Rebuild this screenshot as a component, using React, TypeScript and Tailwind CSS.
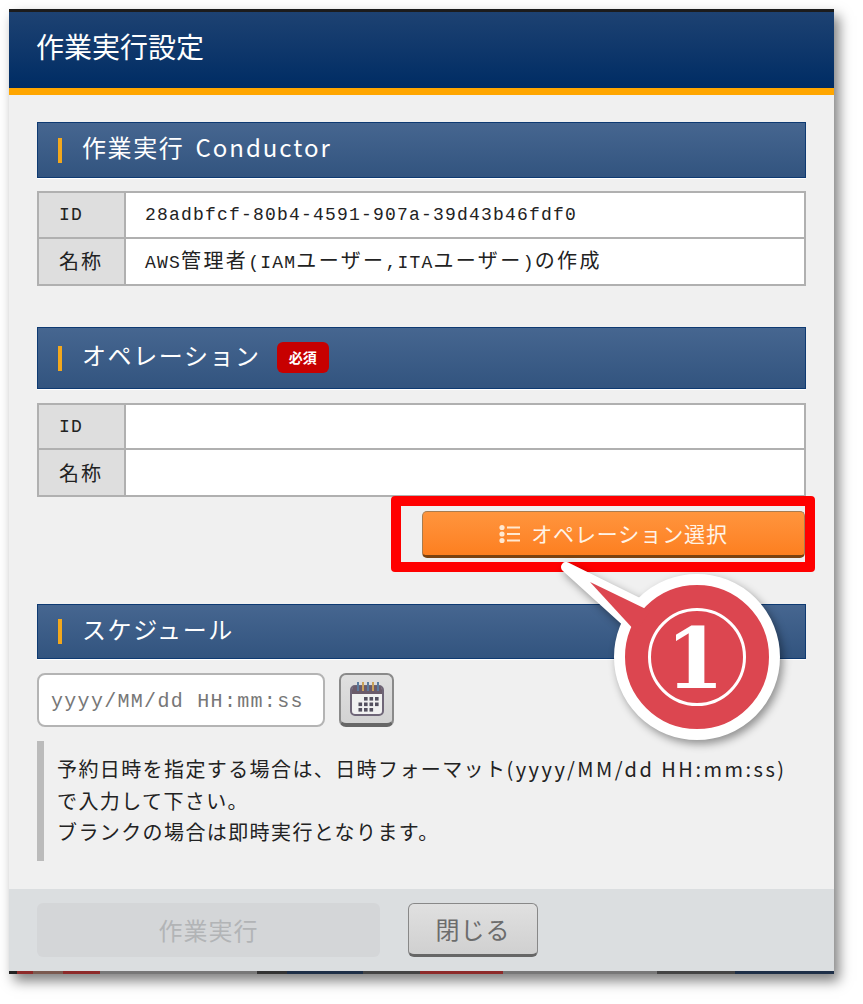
import React from 'react';

const MONO = 'font-["Liberation_Mono","Noto_Sans_CJK_JP",monospace] text-[18px] tracking-[1.2px] text-[#222]';
const JP = 'font-["Noto_Sans_CJK_JP",sans-serif] text-[20px] tracking-[2.4px]';

const SectionTitle: React.FC<{ heightClass: string; children: React.ReactNode }> = ({ heightClass, children }) => (
  <div className={`flex items-center gap-[20px] border border-[#0e3a72] bg-gradient-to-b from-[#466690] to-[#32547f] pl-[20px] shadow-[0_1px_0_#ffffff] ${heightClass}`}>
    <span className="h-[25px] w-[4px] bg-[#f2a81d]" />
    {children}
  </div>
);

const Title: React.FC<{ children: React.ReactNode }> = ({ children }) => (
  <span className='pb-[6px] font-["Noto_Sans_CJK_JP",sans-serif] text-[24px] tracking-[1.6px] text-white'>{children}</span>
);

const InfoRow: React.FC<{ label: React.ReactNode; children?: React.ReactNode }> = ({ label, children }) => (
  <div className="grid grid-cols-[85px_1fr]">
    <div className="flex items-center justify-start bg-[#dedede] pl-[20px]">{label}</div>
    <div className="flex items-center border-l-2 border-[#b0b0b0] bg-white pl-[19px]">{children}</div>
  </div>
);

const InfoTable: React.FC<{ idValue?: React.ReactNode; nameValue?: React.ReactNode; heightClass: string }> = ({ idValue, nameValue, heightClass }) => (
  <div className={`grid grid-rows-2 divide-y-2 divide-[#b0b0b0] border-2 border-[#b0b0b0] ${heightClass}`}>
    <InfoRow label={<span className={MONO + ' block pt-[2px]'}>ID</span>}>{idValue}</InfoRow>
    <InfoRow label={<span className={JP + ' tracking-[2px] text-[#222]'}>名称</span>}>{nameValue}</InfoRow>
  </div>
);

const ListIcon = () => (
  <svg width="22" height="20" viewBox="0 0 22 20" fill="#ffe9d2">
    <circle cx="3" cy="3.5" r="2.6" />
    <circle cx="3" cy="10" r="2.6" />
    <circle cx="3" cy="16.5" r="2.6" />
    <rect x="8" y="2.5" width="13" height="2" />
    <rect x="8" y="9" width="13" height="2" />
    <rect x="8" y="15.5" width="13" height="2" />
  </svg>
);

const CalendarIcon = () => (
  <svg width="36" height="36" viewBox="0 0 36 36">
    <rect x="2" y="5" width="32" height="29" rx="4" fill="#f1f1f1" stroke="#6f6678" strokeWidth="2" />
    <path d="M3 9 a4 4 0 0 1 4 -4 h22 a4 4 0 0 1 4 4 v4 h-30 z" fill="#6b5c6b" />
    {[8, 13, 18, 23, 28].map((x, i) => (
      <rect key={x} x={x} y="1" width="2" height="9" fill={i % 2 ? '#c9a15a' : '#5c7da0'} />
    ))}
    {[
      [15, 16], [20.5, 16], [26, 16],
      [9.5, 21.5], [15, 21.5], [20.5, 21.5], [26, 21.5],
      [9.5, 27], [15, 27], [20.5, 27],
    ].map(([x, y]) => (
      <rect key={`${x}-${y}`} x={x} y={y} width="3.6" height="3.6" fill="#54505f" />
    ))}
  </svg>
);

const strip = [
  'w-[8px] bg-[#222]', 'w-[16px] bg-[#8d2a2a]', 'w-[30px] bg-[#7a5a50]', 'w-[37px] bg-[#8d2a2a]', 'w-[157px] bg-[#777]',
  'w-[30px] bg-[#333]', 'w-[76px] bg-[#1e2f47]', 'w-[57px] bg-[#444]', 'w-[83px] bg-[#8d2a2a]', 'w-[154px] bg-[#777]',
  'w-[78px] bg-[#444]', 'flex-1 bg-[#1e2f47]',
];

export default function App() {
  return (
    <div className="relative h-[1004px] w-[863px] overflow-hidden bg-white pl-[9px] pt-[9px]">
      <div className="flex h-[965px] w-[825px] flex-col bg-[#f0f0f0] shadow-[5px_7px_12px_rgba(0,0,0,0.5)]">
        <header className="h-[86px] border-t-[3px] border-b-[7px] border-t-[#1c1c1c] border-b-[#ffa600] bg-gradient-to-b from-[#1d4272] to-[#002c64] pl-[27px] pt-[14px]">
          <h1 className='font-["Noto_Sans_CJK_JP",sans-serif] text-[28px] leading-[40px] text-white'>作業実行設定</h1>
        </header>

        <main className="flex-1 px-[28px] pt-[27px]">
          <SectionTitle heightClass="h-[56px]">
            <Title>
              作業実行<span className="ml-[11px] tracking-[2px]">Conductor</span>
            </Title>
          </SectionTitle>
          <div className="mt-[13px]">
            <InfoTable
              heightClass="h-[95px]"
              idValue={<span className={MONO + ' block pt-[2px]'}>28adbfcf-80b4-4591-907a-39d43b46fdf0</span>}
              nameValue={
                <span className={MONO}>
                  AWS<span className={JP}>管理者</span>(IAM<span className={JP}>ユーザー</span>,ITA<span className={JP}>ユーザー</span>)<span className={JP}>の作成</span>
                </span>
              }
            />
          </div>

          <div className="mt-[41px]">
            <SectionTitle heightClass="h-[62px]">
              <Title>オペレーション</Title>
              <span className='-ml-[4px] mb-[2px] flex h-[31px] w-[52px] items-center justify-center rounded-[6px] bg-[#c70000] font-["Noto_Sans_CJK_JP",sans-serif] text-[14px] font-bold text-white'>必須</span>
            </SectionTitle>
          </div>
          <div className="mt-[14px]">
            <InfoTable heightClass="h-[94px]" />
          </div>

          <div className="mt-[14px] flex justify-end pr-px">
            <button className='flex h-[47px] w-[383px] items-center justify-center gap-[10px] rounded-[5px] border border-[#a87c4f] border-b-[3px] border-b-[#7a4210] bg-gradient-to-b from-[#ff953d] to-[#fd7f1f] font-["Noto_Sans_CJK_JP",sans-serif] text-[21px] tracking-[0.9px] text-[#fff3e6]'>
              <ListIcon />
              オペレーション選択
            </button>
          </div>

          <div className="mt-[46px]">
            <SectionTitle heightClass="h-[55px]">
              <Title>スケジュール</Title>
            </SectionTitle>
          </div>

          <div className="mt-[14px] flex items-center gap-[14px]">
            <div className='flex h-[54px] w-[288px] items-center rounded-[8px] border-2 border-[#b4b4b4] bg-white pl-[12px] pt-[4px] font-["Liberation_Mono",monospace] text-[20px] tracking-[1.3px] text-[#777]'>
              yyyy/MM/dd HH:mm:ss
            </div>
            <button className="flex h-[54px] w-[55px] items-center justify-center rounded-[7px] border-2 border-[#8a8a8a] border-b-[4px] border-b-[#666] bg-gradient-to-b from-[#e0e0e0] to-[#d2d2d2]">
              <CalendarIcon />
            </button>
          </div>

          <div className='mt-[14px] h-[120px] border-l-[7px] border-[#bbbbbb] pl-[13px] pt-[12px] font-["Noto_Sans_CJK_JP",sans-serif] text-[20px] leading-[31.5px] tracking-[1.4px] text-[#222]'>
            <p>予約日時を指定する場合は、日時フォーマット<span className="tracking-[2.5px]">(yyyy/MM/dd HH:mm:ss)</span></p>
            <p>で入力して下さい。</p>
            <p>ブランクの場合は即時実行となります。</p>
          </div>
        </main>

        <footer className="flex h-[82px] shrink-0 items-start gap-[28px] bg-[#dbdee0] px-[28px] pt-[14px]">
          <button className='h-[54px] w-[343px] rounded-[6px] bg-[#d4d6d8] font-["Noto_Sans_CJK_JP",sans-serif] text-[24px] tracking-[1px] text-[#b2b4b6]'>作業実行</button>
          <button className='h-[54px] w-[130px] rounded-[6px] border border-[#888] border-b-[3px] border-b-[#666] bg-gradient-to-b from-[#e0e0e0] to-[#d0d0d0] font-["Noto_Sans_CJK_JP",sans-serif] text-[24px] tracking-[1px] text-[#6c6c6c]'>閉じる</button>
        </footer>
        <div className="flex h-[3px] shrink-0">
          {strip.map((c, i) => <span key={i} className={c} />)}
        </div>
      </div>

      {/* annotation over the button */}
      <div className="absolute left-[391px] top-[496px] h-[76px] w-[424px] rounded-[4px] border-[10px] border-[#ff0000]" />
      <svg className="absolute left-[550px] top-[550px] drop-shadow-[3px_4px_4px_rgba(0,0,0,0.4)]" width="240" height="200" viewBox="550 550 240 200">
        <path d="M566 567 L643 605 L630 625 Z" fill="#dc4650" stroke="#ffffff" strokeWidth="10" strokeLinejoin="round" />
        <circle cx="697" cy="657" r="77.5" fill="#dc4650" stroke="#ffffff" strokeWidth="11" />
        <path d="M590 582 L650 611 L636 632 Z" fill="#dc4650" />
        <circle cx="697" cy="657" r="47.5" fill="none" stroke="#ffffff" strokeWidth="3" />
        <text x="695" y="688" textAnchor="middle" fontFamily="DejaVu Serif, serif" fontWeight="700" fontSize="84" fill="#ffffff">1</text>
      </svg>
    </div>
  );
}
